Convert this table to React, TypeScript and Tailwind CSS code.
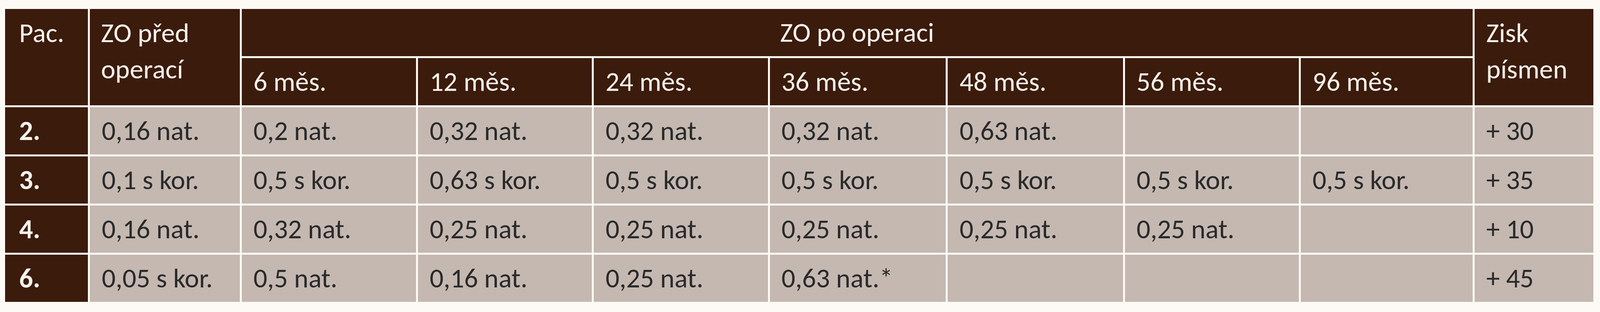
const months = ["6 měs.", "12 měs.", "24 měs.", "36 měs.", "48 měs.", "56 měs.", "96 měs."];

const rows = [
  { pac: "2.", pre: "0,16 nat.", post: ["0,2 nat.", "0,32 nat.", "0,32 nat.", "0,32 nat.", "0,63 nat.", "", ""], gain: "+ 30" },
  { pac: "3.", pre: "0,1 s kor.", post: ["0,5 s kor.", "0,63 s kor.", "0,5 s kor.", "0,5 s kor.", "0,5 s kor.", "0,5 s kor.", "0,5 s kor."], gain: "+ 35" },
  { pac: "4.", pre: "0,16 nat.", post: ["0,32 nat.", "0,25 nat.", "0,25 nat.", "0,25 nat.", "0,25 nat.", "0,25 nat.", ""], gain: "+ 10" },
  { pac: "6.", pre: "0,05 s kor.", post: ["0,5 nat.", "0,16 nat.", "0,25 nat.", "0,63 nat.*", "", "", ""], gain: "+ 45" },
];

const head = "bg-[#3b1b0c] text-[#f7f2ec]";
const cell = "bg-[#c4b8b1] text-[#2a2a2a] flex items-center pl-[30px] whitespace-nowrap overflow-hidden";

export default function App() {
  return (
    <div
      className="w-full h-[800px] bg-[#fdfaf5] pt-[23px] pl-[13px] pr-[17px]"
      style={{ fontFamily: "Carlito, Lato, 'Open Sans', sans-serif" }}
    >
      {/* column widths follow the reference table, scaled to the page width */}
      <div className="grid grid-cols-[minmax(0,229fr)_minmax(0,413fr)_minmax(0,481fr)_minmax(0,480fr)_minmax(0,480fr)_minmax(0,486fr)_minmax(0,483fr)_minmax(0,480fr)_minmax(0,474fr)_minmax(0,328fr)] grid-rows-[repeat(6,121px)] gap-[5px] text-[70px] leading-[93px]">
        <div className={`${head} row-span-2 pl-[36px] pt-[15px]`}>Pac.</div>
        <div className={`${head} row-span-2 pl-[28px] pt-[15px]`}>
          ZO před
          <br />
          operací
        </div>
        <div className={`${head} col-span-7 flex items-center justify-center`}>ZO po operaci</div>
        <div className={`${head} row-span-2 pl-[30px] pt-[15px]`}>
          Zisk
          <br />
          písmen
        </div>
        {months.map((m) => (
          <div key={m} className={`${head} flex items-center pl-[30px] whitespace-nowrap`}>
            {m}
          </div>
        ))}

        {rows.map((r) => (
          <div key={r.pac} className="contents">
            <div className={`${head} font-bold flex items-center pl-[36px]`}>{r.pac}</div>
            <div className={cell}>{r.pre}</div>
            {r.post.map((v, i) => (
              <div key={i} className={cell}>
                {v}
              </div>
            ))}
            <div className={cell}>{r.gain}</div>
          </div>
        ))}
      </div>
    </div>
  );
}
